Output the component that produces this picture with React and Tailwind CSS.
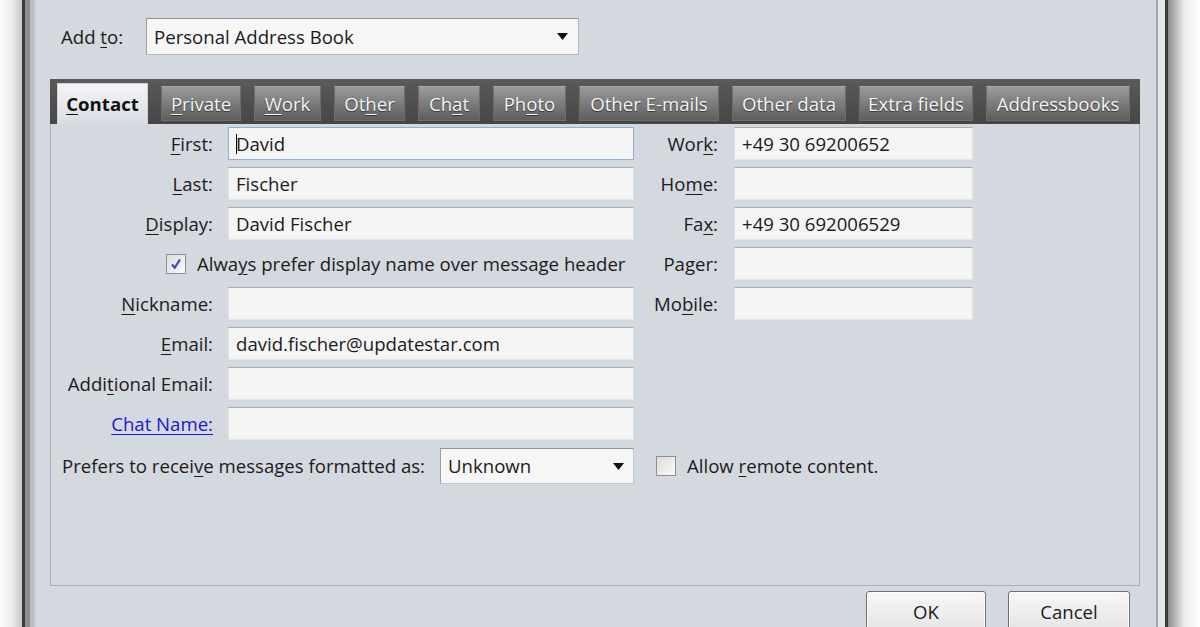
import React from 'react';

const Key = ({ children }) => <span className="underline underline-offset-[3px] decoration-1">{children}</span>;

const Field = ({ value, focused, width = 'w-[406px]' }) => (
    <div
        className={`${width} h-[33px] flex items-center px-[7px] bg-[#f4f4f4] border ${focused ? 'border-[#8fb0d6]' : 'border-[#e2e4e7] border-t-[#a9acb1]'}`}
    >
        {focused && <span className="w-px h-[20px] bg-black mr-[-1px]" />}
        <span className="whitespace-nowrap">{value}</span>
    </div>
);

const Arrow = () => (
    <svg width="11" height="7" viewBox="0 0 11 7"><path d="M0 0h11L5.5 7z" fill="#111" /></svg>
);

const Check = ({ checked }) => (
    <div className="w-[20px] h-[20px] border border-[#8e8f8f] bg-gradient-to-br from-[#dcdcdc] to-[#fafafa] flex items-center justify-center">
        {checked && (
            <svg width="14" height="14" viewBox="0 0 14 14">
                <path d="M3 7.5l2.8 3.2L11 2.5" fill="none" stroke="#3a4fa8" strokeWidth="2.2" />
            </svg>
        )}
    </div>
);

const tabs = [
    { w: 'w-[80px]', label: <><Key>P</Key>rivate</> },
    { w: 'w-[67px]', label: <><Key>W</Key>ork</> },
    { w: 'w-[71px]', label: <>Ot<Key>h</Key>er</> },
    { w: 'w-[62px]', label: <>Ch<Key>a</Key>t</> },
    { w: 'w-[73px]', label: <>Ph<Key>o</Key>to</> },
    { w: 'w-[140px]', label: <>Other E-mails</> },
    { w: 'w-[114px]', label: <>Other data</> },
    { w: 'w-[114px]', label: <>Extra fields</> },
    { w: 'w-[144px]', label: <>Addressbooks</> },
];

const leftRows = [
    { label: <><Key>F</Key>irst:</>, value: 'David', focused: true },
    { label: <><Key>L</Key>ast:</>, value: 'Fischer' },
    { label: <><Key>D</Key>isplay:</>, value: 'David Fischer' },
];

const rightRows = [
    { label: <>Wor<Key>k</Key>:</>, value: '+49 30 69200652' },
    { label: <>Ho<Key>m</Key>e:</>, value: '' },
    { label: <>Fa<Key>x</Key>:</>, value: '+49 30 692006529' },
    { label: <>Pa<Key>g</Key>er:</>, value: '' },
    { label: <>Mo<Key>b</Key>ile:</>, value: '' },
];

const Label = ({ children, className = '' }) => (
    <div className={`text-right whitespace-nowrap ${className}`}>{children}</div>
);

export default function App() {
    return (
        <div className="w-[1200px] h-[627px] flex overflow-hidden font-['Open_Sans',sans-serif] text-[18.6px] text-[#1b1b1b]">
            {/* left window frame */}
            <div className="w-[22px] bg-gradient-to-r from-[#fdfdfd] via-[#eeeeee] to-[#c8c8c8]" />
            <div className="w-[3px] bg-[#3c3c3c]" />
            <div className="w-[5px] bg-[#8f8f8f]" />
            <div className="w-[4px] bg-[#b9bcc0]" />
            <div className="w-[2px] bg-[#c9ccd2]" />

            {/* dialog */}
            <div className="w-[1120px] h-[627px] overflow-hidden bg-[#d4d8df] flex flex-col">
                <div className="shrink-0 flex items-center pt-[18px] pl-[25px]">
                    <span className="w-[85px]">Add <Key>t</Key>o:</span>
                    <div className="w-[433px] h-[37px] flex items-center justify-between pl-[7px] pr-[10px] bg-[#f6f6f6] border border-[#b5b8bd] border-t-[#8f9296] border-l-[#9a9da1]">
                        <span>Personal Address Book</span>
                        <Arrow />
                    </div>
                </div>

                {/* tab strip */}
                <div className="shrink-0 ml-[14px] mt-[24px] w-[1090px] h-[45px] bg-gradient-to-b from-[#5a5a5a] to-[#464646] flex items-end pl-[7px] gap-[13px] pt-[4px]">
                    <div className="w-[91px] h-[41px] bg-gradient-to-b from-[#f3f4f6] to-[#d9dde3] flex items-center justify-center font-bold text-[#111] border border-[#cfd2d7] border-b-0">
                        <span><Key>C</Key>ontact</span>
                    </div>
                    {tabs.map((t, i) => (
                        <div
                            key={i}
                            className={`${t.w} h-[35px] mb-[3px] flex items-center justify-center bg-gradient-to-b from-[#9b9b9b] via-[#7c7c7c] to-[#5e5e5e] text-[#f5f5f5] [text-shadow:0_1px_1px_#333] border border-[#6c6c6c] border-t-[#a8a8a8]`}
                        >
                            <span className="whitespace-nowrap">{t.label}</span>
                        </div>
                    ))}
                </div>

                {/* tab panel */}
                <div className="shrink-0 ml-[14px] w-[1090px] h-[462px] border border-t-0 border-[#a9adb4] flex flex-col">
                    <div className="flex pt-[3px]">
                        {/* left column */}
                        <div className="flex flex-col">
                            {leftRows.map((r, i) => (
                                <div key={i} className="flex items-center h-[40px] pb-[7px]">
                                    <Label className="w-[162px]">{r.label}</Label>
                                    <div className="ml-[15px]"><Field value={r.value} focused={r.focused} /></div>
                                </div>
                            ))}
                            <div className="flex items-center h-[40px] pb-[7px] pl-[115px] gap-[11px]">
                                <Check checked />
                                <span className="whitespace-nowrap">Alwa<Key>y</Key>s prefer display name over message header</span>
                            </div>
                            {[
                                { label: <><Key>N</Key>ickname:</>, value: '' },
                                { label: <><Key>E</Key>mail:</>, value: 'david.fischer@updatestar.com' },
                                { label: <>Addi<Key>t</Key>ional Email:</>, value: '' },
                                { label: <span className="text-[#1a1ad0] underline underline-offset-[3px] decoration-1">Chat Name:</span>, value: '' },
                            ].map((r, i) => (
                                <div key={i} className="flex items-center h-[40px] pb-[7px]">
                                    <Label className="w-[162px]">{r.label}</Label>
                                    <div className="ml-[15px]"><Field value={r.value} /></div>
                                </div>
                            ))}
                        </div>

                        {/* right column */}
                        <div className="flex flex-col">
                            {rightRows.map((r, i) => (
                                <div key={i} className="flex items-center h-[40px] pb-[7px]">
                                    <Label className="w-[84px]">{r.label}</Label>
                                    <div className="ml-[16px]"><Field value={r.value} width="w-[239px]" /></div>
                                </div>
                            ))}
                        </div>
                    </div>

                    <div className="flex items-center mt-[1px] pl-[11px]">
                        <span className="whitespace-nowrap">Prefers to recei<Key>v</Key>e messages formatted as:</span>
                        <div className="ml-[15px] w-[194px] h-[36px] flex items-center justify-between pl-[7px] pr-[9px] bg-[#f6f6f6] border border-[#c2c5ca] border-t-[#8f9296] border-l-[#9a9da1]">
                            <span>Unknown</span>
                            <Arrow />
                        </div>
                        <div className="ml-[22px]"><Check /></div>
                        <span className="ml-[11px] whitespace-nowrap">Allow <Key>r</Key>emote content.</span>
                    </div>
                </div>

                {/* buttons */}
                <div className="shrink-0 flex justify-end gap-[22px] mt-[5px] pr-[26px]">
                    <button className="w-[120px] h-[42px] rounded-[3px] border border-[#6f6f6f] bg-gradient-to-b from-[#f7f7f7] to-[#e4e4e4] shadow-[inset_0_0_0_1px_#ffffff]">OK</button>
                    <button className="w-[122px] h-[42px] rounded-[3px] border border-[#6f6f6f] bg-gradient-to-b from-[#f7f7f7] to-[#e4e4e4] shadow-[inset_0_0_0_1px_#ffffff]">Cancel</button>
                </div>
            </div>

            {/* right window frame */}
            <div className="w-[2px] bg-[#a3a7ad]" />
            <div className="w-[7px] bg-[#e6e7e9]" />
            <div className="w-[3px] bg-[#3a3a3a]" />
            <div className="flex-1 bg-gradient-to-r from-[#8c8c8c] via-[#ececec] to-[#ffffff]" />
        </div>
    );
}
